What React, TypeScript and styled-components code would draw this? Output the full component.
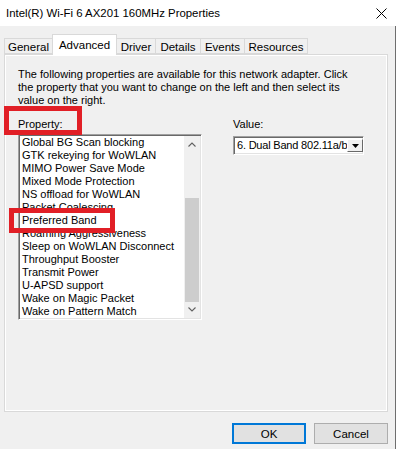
import React from 'react';
import styled, { createGlobalStyle } from 'styled-components';

const Global = createGlobalStyle`
  html, body { margin: 0; padding: 0; background: #f0f0f0; }
  body { font-family: "Liberation Sans", Arial, sans-serif; font-size: 11px; color: #000; }
`;

const Window = styled.div`
  position: relative;
  width: 396px;
  height: 449px;
  background: #f0f0f0;
  display: flex;
  flex-direction: column;
  overflow: hidden;
`;

const TitleBar = styled.div`
  height: 26px;
  flex: none;
  background: #fff;
  display: flex;
  align-items: center;
  justify-content: space-between;
  padding: 0 9px 0 6px;
  font-size: 11.4px;
  color: #000;
`;

const CloseIcon = styled.svg`
  width: 11px;
  height: 11px;
  margin-top: 1px;
`;

const Body = styled.div`
  flex: 1;
  display: flex;
  flex-direction: column;
  padding: 8px 7px 0 4px;
  border-right: 1px solid #6e6e6e;
`;

const TabStrip = styled.div`
  display: flex;
  align-items: flex-end;
  height: 21px;
  margin-bottom: -1px;
  position: relative;
  z-index: 1;
`;

const Tab = styled.div<{ $w: number; $active?: boolean }>`
  box-sizing: border-box;
  width: ${p => p.$w}px;
  height: ${p => (p.$active ? 21 : 16)}px;
  margin-bottom: ${p => (p.$active ? 0 : 1)}px;
  margin-left: -1px;
  &:first-child { margin-left: 0; }
  border: 1px solid #d9d9d9;
  border-bottom: ${p => (p.$active ? 'none' : '1px solid #d9d9d9')};
  background: ${p => (p.$active ? '#fff' : '#f0f0f0')};
  display: flex;
  align-items: center;
  justify-content: center;
  padding-top: ${p => (p.$active ? 0 : 1)}px;
  font-size: 11.5px;
  position: relative;
  z-index: ${p => (p.$active ? 2 : 1)};
`;

const Panel = styled.div`
  box-sizing: border-box;
  height: 358px;
  border: 1px solid #d9d9d9;
  box-shadow: inset 0 0 0 1px #fff;
  padding: 13px 13px 0 13px;
  display: flex;
  flex-direction: column;
`;

const Description = styled.div`
  line-height: 13px;
`;

const Line = styled.span`
  display: block;
  white-space: nowrap;
`;

const Columns = styled.div`
  display: flex;
  margin-top: 11px;
`;

const Column = styled.div<{ $w: number; $ml?: number }>`
  width: ${p => p.$w}px;
  margin-left: ${p => p.$ml ?? 0}px;
  display: flex;
  flex-direction: column;
`;

const Label = styled.div`
  line-height: 13px;
  height: 13px;
  margin-bottom: 3px;
`;

const ListBox = styled.div`
  box-sizing: border-box;
  height: 186px;
  background: #fff;
  border-top: 1px solid #a0a0a0;
  border-left: 1px solid #a0a0a0;
  border-right: 1px solid #fff;
  border-bottom: 1px solid #fff;
  box-shadow: inset 1px 1px 0 #696969, inset -1px -1px 0 #e3e3e3;
  display: flex;
  padding: 1px;
`;

const Items = styled.div`
  flex: 1;
  overflow: hidden;
  padding: 0 0 0 2px;
`;

const Item = styled.div`
  height: 13px;
  line-height: 13px;
  white-space: nowrap;
`;

const ScrollBar = styled.div`
  width: 16px;
  background: #f0f0f0;
  display: flex;
  flex-direction: column;
  align-items: stretch;
`;

const ScrollArrow = styled.div`
  height: 17px;
  display: flex;
  align-items: center;
  justify-content: center;
`;

const Track = styled.div`
  flex: 1;
  display: flex;
  flex-direction: column;
  padding: 0 1px;
`;

const Thumb = styled.div<{ $top: number; $h: number }>`
  margin-top: ${p => p.$top}px;
  height: ${p => p.$h}px;
  background: #cdcdcd;
`;

const Combo = styled.div`
  box-sizing: border-box;
  width: 131px;
  height: 19px;
  margin-top: 2px;
  background: #fff;
  border-top: 1px solid #a0a0a0;
  border-left: 1px solid #a0a0a0;
  border-right: 1px solid #fff;
  border-bottom: 1px solid #fff;
  box-shadow: inset 1px 1px 0 #696969, inset -1px -1px 0 #e3e3e3;
  display: flex;
  align-items: stretch;
  padding: 2px;
`;

const ComboText = styled.div`
  flex: 1;
  white-space: nowrap;
  line-height: 13px;
  padding-left: 1px;
  letter-spacing: -0.2px;
`;

const ComboButton = styled.div`
  width: 14px;
  flex: none;
  background: #f0f0f0;
  border-top: 1px solid #fff;
  border-left: 1px solid #fff;
  border-right: 1px solid #696969;
  border-bottom: 1px solid #696969;
  display: flex;
  align-items: center;
  justify-content: center;
`;

const Footer = styled.div`
  display: flex;
  justify-content: flex-end;
  gap: 8px;
  padding-top: 11px;
`;

const Button = styled.button<{ $default?: boolean }>`
  box-sizing: border-box;
  width: 74px;
  height: 21px;
  padding: 0;
  font-family: inherit;
  font-size: 11.5px;
  color: #000;
  background: #e1e1e1;
  border: ${p => (p.$default ? '2px solid #0078d7' : '1px solid #adadad')};
`;

const Highlight = styled.div<{ $x: number; $y: number; $w: number; $h: number }>`
  position: absolute;
  left: ${p => p.$x}px;
  top: ${p => p.$y}px;
  width: ${p => p.$w}px;
  height: ${p => p.$h}px;
  box-sizing: border-box;
  border: 5px solid #e11f26;
  z-index: 5;
`;

const tabs: { label: string; w: number; active?: boolean }[] = [
  { label: 'General', w: 49 },
  { label: 'Advanced', w: 65, active: true },
  { label: 'Driver', w: 40 },
  { label: 'Details', w: 46 },
  { label: 'Events', w: 45 },
  { label: 'Resources', w: 64 },
];

const items = [
  'Global BG Scan blocking',
  'GTK rekeying for WoWLAN',
  'MIMO Power Save Mode',
  'Mixed Mode Protection',
  'NS offload for WoWLAN',
  'Packet Coalescing',
  'Preferred Band',
  'Roaming Aggressiveness',
  'Sleep on WoWLAN Disconnect',
  'Throughput Booster',
  'Transmit Power',
  'U-APSD support',
  'Wake on Magic Packet',
  'Wake on Pattern Match',
];

const Chevron = ({ up }: { up?: boolean }) => (
  <svg width="8" height="5" viewBox="0 0 8 5">
    <path
      d={up ? 'M0.5 4.5 L4 1 L7.5 4.5' : 'M0.5 0.5 L4 4 L7.5 0.5'}
      fill="none"
      stroke="#606060"
      strokeWidth="1.1"
    />
  </svg>
);

export default function App() {
  return (
    <>
      <Global />
      <Window>
        <TitleBar>
          <span>Intel(R) Wi-Fi 6 AX201 160MHz Properties</span>
          <CloseIcon viewBox="0 0 11 11">
            <path d="M0.5 0.5 L10.5 10.5 M10.5 0.5 L0.5 10.5" stroke="#000" strokeWidth="1" />
          </CloseIcon>
        </TitleBar>
        <Body>
          <TabStrip>
            {tabs.map(t => (
              <Tab key={t.label} $w={t.w} $active={t.active}>
                {t.label}
              </Tab>
            ))}
          </TabStrip>
          <Panel>
            <Description>
              <Line>The following properties are available for this network adapter. Click</Line>
              <Line>the property that you want to change on the left and then select its</Line>
              <Line>value on the right.</Line>
            </Description>
            <Columns>
              <Column $w={184}>
                <Label>Property:</Label>
                <ListBox>
                  <Items>
                    {items.map(i => (
                      <Item key={i}>{i}</Item>
                    ))}
                  </Items>
                  <ScrollBar>
                    <ScrollArrow>
                      <Chevron up />
                    </ScrollArrow>
                    <Track>
                      <Thumb $top={45} $h={104} />
                    </Track>
                    <ScrollArrow>
                      <Chevron />
                    </ScrollArrow>
                  </ScrollBar>
                </ListBox>
              </Column>
              <Column $w={131} $ml={31}>
                <Label>Value:</Label>
                <Combo>
                  <ComboText>6. Dual Band 802.11a/b</ComboText>
                  <ComboButton>
                    <svg width="7" height="4" viewBox="0 0 7 4">
                      <path d="M0 0 L7 0 L3.5 4 Z" fill="#000" />
                    </svg>
                  </ComboButton>
                </Combo>
              </Column>
            </Columns>
          </Panel>
          <Footer>
            <Button $default>OK</Button>
            <Button>Cancel</Button>
          </Footer>
        </Body>
        <Highlight $x={4} $y={106} $w={78} $h={29} />
        <Highlight $x={9} $y={208} $w={106} $h={25} />
      </Window>
    </>
  );
}
